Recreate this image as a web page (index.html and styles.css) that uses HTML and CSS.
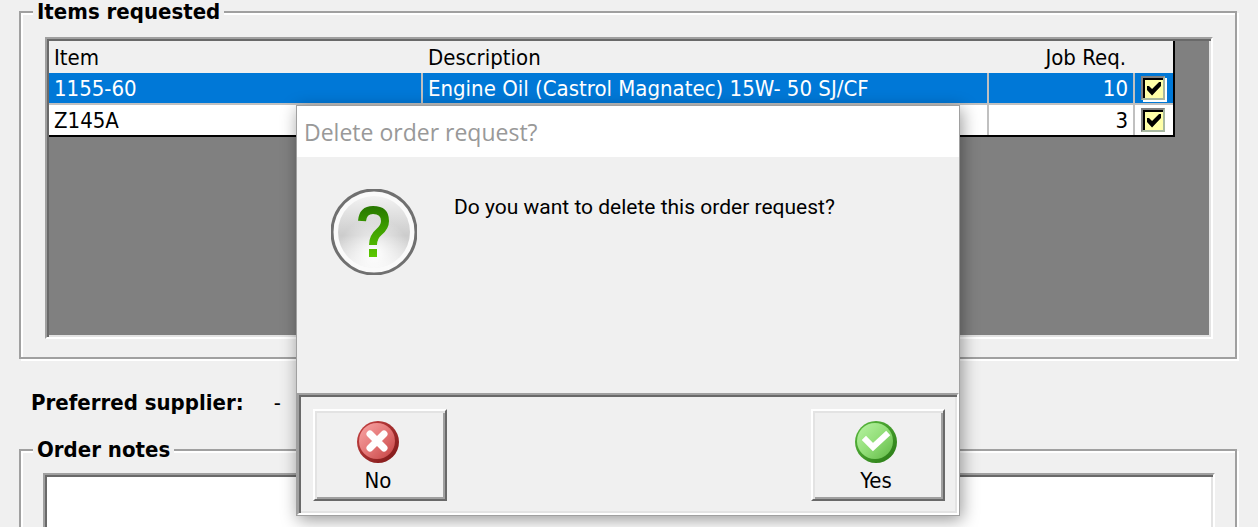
FILE: index.html
```
<!DOCTYPE html>
<html lang="en">
	<head>
		<meta charset="UTF-8">
		<meta name="viewport" content="width=device-width, initial-scale=1.0">
		<title>Order request</title>
		<link rel="stylesheet" href="styles.css">
	</head>
	<body>
		<main class="page">
			<fieldset class="group">
				<legend>Items requested</legend>
				<div class="grid sunken">
					<table class="items">
						<colgroup>
							<col class="col-item">
							<col>
							<col class="col-req">
							<col class="col-check">
						</colgroup>
						<thead>
							<tr>
								<th>Item</th>
								<th>Description</th>
								<th class="number">Job Req.</th>
								<th></th>
							</tr>
						</thead>
						<tbody>
							<tr class="selected">
								<td>1155-60</td>
								<td>Engine Oil (Castrol Magnatec) 15W- 50 SJ/CF</td>
								<td class="number">10</td>
								<td class="check"><input type="checkbox" aria-label="Include 1155-60" checked></td>
							</tr>
							<tr>
								<td>Z145A</td>
								<td></td>
								<td class="number">3</td>
								<td class="check"><input type="checkbox" aria-label="Include Z145A" checked></td>
							</tr>
						</tbody>
					</table>
				</div>
			</fieldset>

			<div class="supplier">
				<span>Preferred supplier:</span>
				<span class="supplier-name">-</span>
			</div>

			<fieldset class="group notes">
				<legend>Order notes</legend>
				<textarea class="sunken" aria-label="Order notes"></textarea>
			</fieldset>
		</main>

		<div class="dialog" role="dialog" aria-labelledby="dialog-title">
			<h1 class="dialog-title" id="dialog-title">Delete order request?</h1>
			<div class="dialog-body">
				<svg class="question" viewBox="0 0 86 86" aria-hidden="true">
					<defs>
						<linearGradient id="silver" x1="0" y1="0" x2="0" y2="1">
							<stop offset="0" stop-color="#f2f2f2"/>
							<stop offset=".55" stop-color="#cccccc"/>
							<stop offset="1" stop-color="#f0f0f0"/>
						</linearGradient>
						<radialGradient id="shine" cx=".5" cy=".8" r=".5">
							<stop offset="0" stop-color="#fff"/>
							<stop offset="1" stop-color="#fff" stop-opacity="0"/>
						</radialGradient>
						<linearGradient id="mark" x1="0" y1="18" x2="0" y2="68" gradientUnits="userSpaceOnUse">
							<stop offset="0" stop-color="#287800"/>
							<stop offset=".4" stop-color="#3c9c00"/>
							<stop offset="1" stop-color="#5cc800"/>
						</linearGradient>
					</defs>
					<circle cx="43" cy="43" r="42" fill="#fafafa" stroke="#707070" stroke-width="3"/>
					<circle cx="43" cy="43" r="36" fill="url(#silver)"/>
					<circle cx="43" cy="43" r="36" fill="url(#shine)"/>
					<path d="M31 32 Q32 21 42 21 Q54 21 54 32 Q54 38 48 43 Q42 48 42 56" fill="none" stroke="url(#mark)" stroke-width="8"/>
					<path d="M38 60h8v8h-8z" fill="url(#mark)"/>
				</svg>
				<p>Do you want to delete this order request?</p>
			</div>
			<div class="dialog-footer sunken">
				<button type="button">
					<svg viewBox="0 0 42 42" aria-hidden="true">
						<defs>
							<linearGradient id="red" x1="0" y1="0" x2="1" y2="1">
								<stop offset="0" stop-color="#f9a6a6"/>
								<stop offset=".5" stop-color="#e47777"/>
								<stop offset="1" stop-color="#c44040"/>
							</linearGradient>
							<linearGradient id="red-rim" x1="0" y1="0" x2="1" y2="1">
								<stop offset="0" stop-color="#c84444"/>
								<stop offset="1" stop-color="#7c1616"/>
							</linearGradient>
						</defs>
						<circle cx="21" cy="21" r="21" fill="url(#red-rim)"/>
						<circle cx="20" cy="20" r="18" fill="url(#red)"/>
						<path d="M13 13L27 27M27 13L13 27" fill="none" stroke="#fff" stroke-width="7" stroke-linecap="round"/>
					</svg>
					No
				</button>
				<button type="button">
					<svg viewBox="0 0 42 42" aria-hidden="true">
						<defs>
							<linearGradient id="green" x1="0" y1="0" x2="1" y2="1">
								<stop offset="0" stop-color="#b8f4a4"/>
								<stop offset=".5" stop-color="#92de78"/>
								<stop offset="1" stop-color="#60b844"/>
							</linearGradient>
							<linearGradient id="green-rim" x1="0" y1="0" x2="1" y2="1">
								<stop offset="0" stop-color="#5cbc40"/>
								<stop offset="1" stop-color="#287814"/>
							</linearGradient>
						</defs>
						<circle cx="21" cy="21" r="21" fill="url(#green-rim)"/>
						<circle cx="20" cy="20" r="18" fill="url(#green)"/>
						<path d="M11 19L18 26L31 14" fill="none" stroke="#fff" stroke-width="6" stroke-linecap="square"/>
					</svg>
					Yes
				</button>
			</div>
		</div>
	</body>
</html>
```
FILE: styles.css
```
:root {
	--face: #f0f0f0;
	--shadow: #a0a0a0;
	--dark: #696969;
	--light: #e3e3e3;
	--line: #c0c0c0;
	--select: #0078d7;
}

* {
	box-sizing: border-box;
	margin: 0;
	padding: 0;
}

body {
	height: 100vh;
	overflow: hidden;
	position: relative;
	background: var(--face);
	color: #000;
	font: 22px/24px "DejaVu Sans Condensed", Tahoma, sans-serif;
}

.page {
	height: 100%;
	padding: 0 21px 0 19px;
	display: flex;
	flex-direction: column;
}

/* Etched group boxes */
.group {
	border: 2px solid var(--shadow);
	box-shadow: 2px 2px 0 #fff, inset 2px 2px 0 #fff;
	padding: 13px 22px 18px 24px;
	min-width: 0;
}

legend {
	margin-left: -12px;
	padding: 0 4px;
	height: 24px;
	background: var(--face);
	font-weight: bold;
}

.sunken {
	border: 2px solid;
	border-color: var(--shadow) #fff #fff var(--shadow);
	box-shadow: inset 2px 2px 0 var(--dark), inset -2px -2px 0 var(--light);
}

/* Items grid */
.grid {
	height: 302px;
	padding: 2px;
	background: #808080;
}

.items {
	width: calc(100% - 34px);
	table-layout: fixed;
	border-collapse: separate;
	border-spacing: 0;
	border-right: 2px solid #000;
	border-bottom: 2px solid #000;
	background: #fff;
}

.col-item {
	width: 374px;
}

.col-req {
	width: 146px;
}

.col-check {
	width: 38px;
}

.items th,
.items td {
	height: 32px;
	padding: 2px 5px 0;
	font-weight: normal;
	text-align: left;
	white-space: nowrap;
}

.items th {
	background: var(--face);
}

.items td {
	border-right: 2px solid var(--line);
	border-bottom: 2px solid var(--line);
}

.items td:last-child {
	border-right: 0;
}

.items tr:last-child td {
	height: 30px;
	border-bottom: 0;
}

.items .number {
	text-align: right;
}

.items th.number {
	padding-right: 9px;
}

.selected {
	background: var(--select);
	color: #fff;
}

.items .check {
	padding: 0 6px;
}

.check input {
	appearance: none;
	display: block;
	width: 24px;
	height: 24px;
	border: 2px solid #808080;
	border-right-color: #a8b8a0;
	border-bottom-color: #a8b8a0;
	box-shadow: inset 2px 2px 0 #000;
	background: #ffffa8;
}

.selected input {
	box-shadow: inset 2px 2px 0 #000, 2px 2px 0 #fff;
}

.check input:checked::before {
	content: "";
	display: block;
	width: 14px;
	height: 14px;
	margin: 4px;
	background: #000;
	clip-path: polygon(0 28%, 14% 28%, 36% 50%, 86% 0, 100% 0, 100% 28%, 36% 96%, 0 58%);
}

.supplier {
	display: flex;
	gap: 30px;
	padding: 32px 12px 23px;
	font-weight: bold;
}

.supplier-name {
	font-weight: normal;
}

.notes {
	flex: 1;
	padding: 11px 20px 0 22px;
	margin-bottom: -4px;
}

.notes legend {
	margin-left: -10px;
}

.notes textarea {
	display: block;
	width: 100%;
	height: 100%;
	padding: 4px;
	resize: none;
	outline: none;
	background: #fff;
	font: inherit;
}

/* Delete confirmation */
.dialog {
	position: absolute;
	top: 105px;
	left: 296px;
	width: 664px;
	border: 1px solid var(--shadow);
	background: var(--face);
	box-shadow: 2px 4px 16px rgba(0, 0, 0, 0.4);
}

.dialog-title {
	height: 51px;
	padding: 0 7px;
	background: #fff;
	color: #999;
	font: 23px/52px "Open Sans", "Segoe UI", sans-serif;
}

.dialog-body {
	display: flex;
	gap: 37px;
	height: 236px;
	padding: 32px 34px;
}

.dialog-body p {
	padding-top: 6px;
	font-family: Roboto, "Liberation Sans", sans-serif;
	font-size: 21px;
}

.question {
	flex: none;
	width: 86px;
	height: 86px;
}

.dialog-footer {
	display: flex;
	justify-content: space-between;
	padding: 14px 12px 12px 14px;
}

.dialog-footer button {
	display: flex;
	flex-direction: column;
	align-items: center;
	gap: 6px;
	width: 134px;
	height: 92px;
	padding: 10px 4px 0 0;
	border: 2px solid;
	border-color: #fff var(--dark) var(--dark) #fff;
	box-shadow: inset 2px 2px 0 var(--light), inset -2px -2px 0 var(--shadow);
	background: var(--face);
	color: #000;
	font: inherit;
}

.dialog-footer svg {
	width: 42px;
	height: 42px;
}
```
